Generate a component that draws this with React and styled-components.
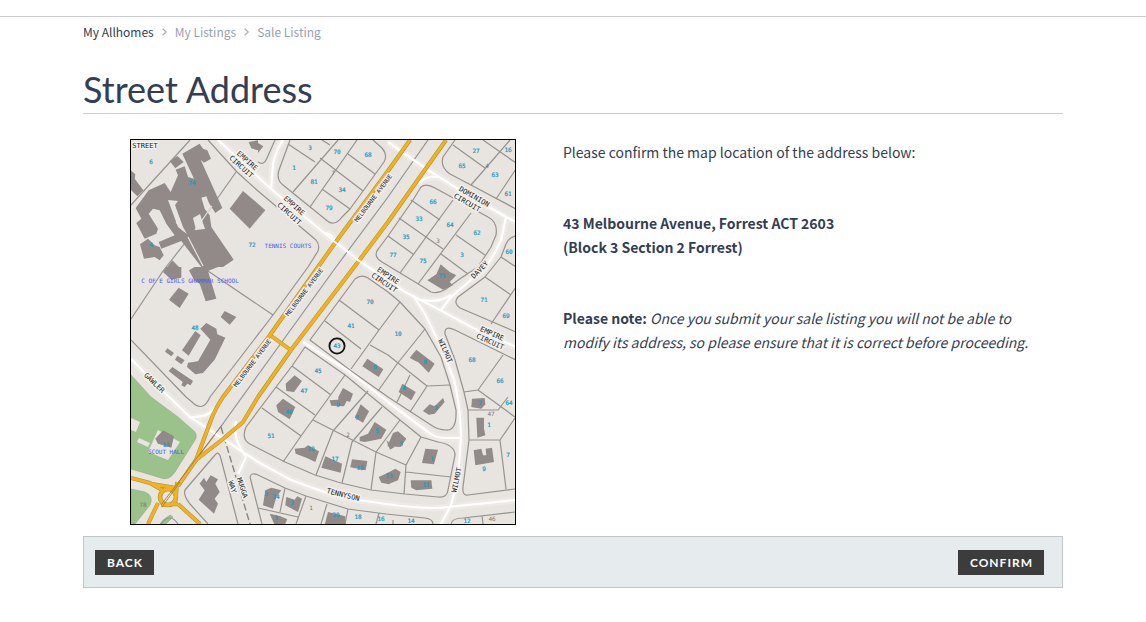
import React from "react";
import styled, { createGlobalStyle, css } from "styled-components";

const GlobalStyle = createGlobalStyle`
  * { box-sizing: border-box; }
  body {
    margin: 0;
    background: #fff;
    color: #343d52;
    font-family: "Noto Sans CJK SC", "Noto Sans", sans-serif;
    font-size: 14px;
    line-height: 24px;
  }
`;

const TopBar = styled.header`
  height: 17px;
  border-bottom: 1px solid #ccc;
`;

const Page = styled.main`
  max-width: 980px;
  margin: 0 auto;
`;

const Breadcrumb = styled.nav`
  display: flex;
  align-items: center;
  gap: 8px;
  height: 30px;
  font-size: 12px;
`;

const Crumb = styled.a`
  color: ${(p) => (p.$root ? "#343d52" : "#9aa1ae")};
  text-decoration: none;
`;

const Title = styled.h1`
  margin: 22px 0 25px;
  padding-bottom: 4px;
  border-bottom: 1px solid #ccc;
  font-family: Lato, sans-serif;
  font-size: 36px;
  font-weight: 400;
  line-height: 40px;
`;

const Content = styled.section`
  display: flex;
  gap: 47px;
  padding-left: 47px;
`;

const MapFrame = styled.figure`
  flex: 0 0 386px;
  margin: 0 0 11px;
  border: 1px solid #000;
  svg { display: block; width: 100%; }
`;

const Details = styled.div`
  flex: 1;
  padding: 1px 16px 0 0;
`;

const Paragraph = styled.p`
  margin: 0 0 47px;
`;

const ActionBar = styled.footer`
  display: flex;
  justify-content: space-between;
  align-items: center;
  height: 52px;
  padding: 0 18px 0 11px;
  border: 1px solid #bfc6c5;
  background: #e6ebed;
`;

const ActionButton = styled.button`
  height: 25px;
  padding: 0 11px 0 12px;
  border: 0;
  background: #3c3c3c;
  color: #fff;
  font-family: Lato, sans-serif;
  font-size: 12px;
  font-weight: 700;
  letter-spacing: 1px;
  text-transform: uppercase;
`;

const haloed = css`
  stroke: #f3f1ee;
  stroke-width: 3px;
  stroke-linejoin: round;
  paint-order: stroke;
`;

const MapLabel = styled.text`
  font-family: "DejaVu Sans Mono", monospace;
  font-size: ${(p) => (p.$kind === "street" ? 7 : 6)}px;
  text-anchor: middle;
  dominant-baseline: central;
  fill: ${(p) =>
    ({ lot: "#2099c0", place: "#4a5cf0", block: "#77726f", street: "#222", avenue: "#222" })[p.$kind]};
  ${(p) => (p.$kind === "street" || p.$kind === "avenue") && haloed}
  ${(p) => p.$kind === "lot" && css`stroke: #2099c0; stroke-width: 0.2px;`}
`;

const parks = [
  "M131 375L151 397L178 417L194 431Q198 435 195 440L175 472Q169 481 161 478L148 474L131 469Z",
  "M131 489L145 492Q154 496 150 505L135 524H131Z",
  "M163 520L170 515L173 517L166 524H160Z",
];

const clearings = [
  "M131 418L140 422L136 432L131 430Z",
  "M139 438L150 443L148 447L137 442Z",
  "M158 430L180 442L168 460L148 452Z",
];

const boundaries = [
  "M190 140L131 205",
  "M208 140L237 172L258 191L316 240Q320 245 318 251L308 267L273 315L210 397Q203 413 192 402L186 397L131 340",
  "M236 172L196 229L163 271L131 319",
  "M205 269L273 315",
  "M428 140L388 197L336 267L258 375L222 425L168 497",
  "M258 162Q264 166 267 158L275 140",
  "M290 140L279 170Q276 180 283 185L325 219Q334 228 342 217L350 209L384 162Q388 155 382 148L373 140",
  "M288 144L315 162M338 140L293 192M357 140L310 207M320 158L363 191M348 154L375 174M322 189L350 209M322 140L330 145",
  "M455 140L443 157Q440 167 450 174L471 185L516 209",
  "M453 145L485 168M471 185L510 140M483 140L516 163M496 199L516 169",
  "M421 187Q426 183 435 188L488 217Q498 222 496 235L491 247L478 267L461 278L446 289Q438 294 431 292L420 285L382 262Q372 256 379 248L388 236L413 200Z",
  "M411 200L440 220M453 200L400 273M399 218L443 249M471 213L418 284M456 235L485 255M388 236L413 254M441 254L468 274",
  "M516 236Q509 237 506 244L501 257L485 277L458 297Q453 303 460 308L516 332",
  "M501 257L516 267M485 277L511 295M491 324L516 287",
  "M516 360L455 330Q444 325 445 334L455 360L464 392L468 410L469 440L463 487Q462 496 468 495L515 489",
  "M503 355L478 390L464 392M478 390L515 417M515 418L500 440H469M500 440L506 489M468 410H498L508 397",
  "M355 279Q361 274 368 278L388 292L400 302L425 329L441 357L450 385L456 410Q457 431 446 430Q438 430 431 425L388 397L350 370L310 340Z",
  "M339 300L379 330M325 321L361 349M400 302L379 330L351 369M370 345L388 355L427 386L450 385M425 329L397 364L378 391M427 386L410 412M410 375L397 402",
  "M305 347L292 366L276 387L246 427Q241 439 250 444L285 462L315 475L341 483L371 490L405 494L438 497Q447 498 448 490L455 455Q455 445 438 442L421 437L400 420L345 375Z",
  "M292 366L331 395M345 375L301 436L283 462M276 387L315 415M262 408L301 436M313 420L376 452L406 465M368 391L333 431L316 475M382 407L352 442L342 483M376 452L371 490M400 420L376 452M421 437L406 465L404 494M406 472L451 477",
  "M250 477Q251 472 258 475L285 488L306 496L348 509L386 514L425 518Q433 519 433 524M250 477L262 524M285 488L280 512M258 508L298 517M306 496L296 524M327 504L321 524M348 509L345 524M379 513L376 524",
  "M451 524Q452 518 463 518L515 512M482 516L483 524",
  "M215 455Q219 450 221 459L238 524M215 455L185 490Q183 495 190 504L208 524",
  "M178 524Q170 512 161 524M393 520V524",
];

const lanes = [
  "M218 140L271 189L323 232L358 260L405 292L440 310L475 329L516 347",
  "M271 189L273 164Q276 150 283 140",
  "M388 142L428 170L455 187L506 217L516 222",
  "M418 184Q426 175 438 177M506 217L501 240Q494 256 485 268L451 297L441 310M421 300Q440 303 451 295",
  "M413 295L425 314L440 345L453 377Q460 400 461 437L458 480L451 505L441 524",
  "M303 342L350 372L388 402L428 432Q435 438 445 438H461",
  "M131 359L168 396L190 417L258 462L291 480L338 497L386 504Q430 510 448 507L515 500",
  "M190 417Q208 418 215 408M324 233Q332 233 336 242M246 457L238 474M236 421Q232 438 246 457",
];

const avenues = [
  "M410 140L388 171L335 243L318 267L270 335L223 397Q215 409 211 420L196 460L178 486",
  "M446 140L388 222L358 262L291 350L258 397L243 422L223 439L196 460",
  "M270 335L292 351",
  "M131 478L150 483L162 490M178 504L200 524M158 503L148 524M177 482L176 497M152 484L176 488M161 505L178 504",
];

// Building footprints are traced per survey tile, at three units to a map unit.
const buildings = [
  [128, 137, [
    "M163 50L215 20L225 35L238 40L249 65L228 77L218 68L283 213L262 228L243 198L235 178L220 182L230 215L245 235L250 270L317 368L285 390H220L160 312L100 335L92 315L140 295L115 260L95 220L75 215L62 230L90 275L85 290L50 305L25 258L40 245L23 213L62 160L110 138L128 165L150 115L143 98L170 88L180 120L198 125Z",
    "M125 72L148 57L167 75L142 94Z", "M8 100L22 112L20 125L46 160L28 178L8 158Z",
    "M36 322L60 305L80 325L95 330L107 355L95 370L80 360L48 365Z",
    "M345 162L390 200V245L365 275L305 215Z", "M118 390L133 370L153 390Z", "M362 15L390 10V40L370 34Z",
  ]],
  [258, 137, ["M0 18L16 28L0 48Z", "M0 200L22 220L0 245Z"]],
  [128, 267, [
    "M105 15L115 0H160V32L130 38Z", "M183 10L200 0H270L240 12L265 95L233 103L215 50L200 42Z",
    "M123 98L152 62L182 80L155 123Z", "M278 150L290 132L325 150L305 173Z",
    "M217 185L235 168L265 185L268 202L292 212L260 278L225 318L202 322L177 300L180 287L210 283L247 218Z",
    "M162 250L202 192L218 205L182 266Z", "M118 244L138 258L130 268L111 254Z", "M148 266L170 280L160 292L141 278Z",
    "M133 300L195 342L188 355L178 350L170 360L160 355L164 345L122 312Z",
  ]],
  [258, 267, ["M83 350L110 325L132 342L108 375L85 372Z", "M328 275L376 307L362 330L313 298Z", "M255 363L285 380L276 405L240 392Z"]],
  [388, 267, [
    "M118 40L145 22L158 -8L185 15L205 25L185 45L195 55L165 68Z",
    "M65 272L85 248L140 290L122 317L100 295L90 285L82 282Z", "M43 350L83 375L70 400L32 375Z",
  ]],
  [128, 397, [
    "M82 125L105 100L138 118L130 152L90 140Z",
    "M235 255L248 235L270 247L262 260L275 285L260 305L270 320L258 350L212 308L230 280L215 260L228 242Z",
  ]],
  [258, 397, [
    "M55 25L75 5L112 30L95 67L60 45Z", "M215 10L240 8L245 -5L275 -5L258 28L220 26Z",
    "M308 22L333 43L315 77L290 62Z", "M305 120L330 110L350 75L385 98L370 125L320 135L305 132Z",
    "M110 155L140 152L150 145L183 163L172 195L145 182L113 170Z", "M202 178L252 200L248 227L190 212Z",
    "M282 187L328 192L323 220L277 211Z", "M362 240L395 225V262L370 257Z", "M385 130L410 150L396 158Z",
    "M22 280L40 272L70 280L55 300L45 335L15 325Z", "M85 300L110 308L118 298L132 305L120 345L82 325Z",
    "M35 350L65 357L88 367L80 384H50Z", "M210 345L262 358V384H200Z",
  ]],
  [388, 397, [
    "M105 42L125 22L140 28L165 3L170 15L140 50L122 53Z", "M55 -5L75 -5L68 8Z",
    "M252 5L290 3L292 22L280 35L250 30Z", "M265 62L288 62V95L292 115L268 122Z",
    "M257 160L280 155L285 175L295 175L293 155L312 152L318 195L262 205Z",
    "M112 155L150 158L138 202L102 198Z", "M15 108L30 103L55 125L38 150L-2 148Z",
    "M68 250L130 250L133 275L85 280L70 272Z", "M-8 232L22 215L38 225L30 250L0 262L-18 250Z",
  ]],
];

const lots = [
  ["6", 151, 161], ["74", 192, 182], ["72", 252, 244], ["4", 151, 244], ["3", 310, 147], ["70", 337, 151], ["68", 368, 154],
  ["1", 294, 167], ["81", 314, 181], ["34", 342, 189], ["79", 329, 207], ["27", 476, 150], ["16", 508, 149],
  ["65", 462, 165], ["63", 495, 174], ["61", 508, 193], ["66", 433, 201], ["33", 419, 218], ["64", 450, 224],
  ["62", 477, 232], ["35", 406, 236], ["3", 462, 254], ["77", 393, 254], ["75", 423, 260], ["60", 509, 251],
  ["73", 442, 275], ["71", 484, 299], ["69", 506, 315], ["70", 370, 301], ["41", 351, 325], ["43", 337, 345],
  ["10", 398, 333], ["8", 425, 361], ["6", 375, 366], ["4", 404, 387], ["68", 472, 359], ["66", 500, 380],
  ["45", 318, 370], ["47", 304, 390], ["49", 289, 411], ["51", 271, 435], ["48", 195, 327], ["9", 338, 404],
  ["7", 357, 417], ["5", 377, 430], ["19", 311, 448], ["17", 335, 458], ["15", 360, 467], ["13", 389, 475],
  ["2", 436, 407], ["3", 401, 443], ["1", 432, 458], ["11", 426, 484], ["2", 480, 402], ["64", 509, 402],
  ["1", 489, 424], ["9", 484, 468], ["7", 508, 454], ["1A", 166, 444], ["3", 266, 493], ["24", 276, 496],
  ["2", 292, 502], ["3", 276, 517], ["20", 336, 514], ["18", 358, 516], ["16", 381, 518], ["14", 411, 520], ["12", 467, 520],
];

const blocks = [["7", 333, 172], ["4", 487, 165], ["3", 438, 240], ["2", 348, 434], ["1", 311, 507], ["47", 491, 413], ["46", 492, 518], ["78", 143, 504]];

const places = [["TENNIS COURTS", 288, 245], ["C OF E GIRLS GRAMMAR SCHOOL", 190, 280], ["SCOUT HALL", 166, 451]];

const streets = [
  ["STREET", 145, 146, 0], ["EMPIRE", 247, 161, 42], ["CIRCUIT", 241, 167, 42], ["EMPIRE", 294, 206, 42], ["CIRCUIT", 289, 214, 42],
  ["DOMINION", 474, 197, 30], ["CIRCUIT", 467, 203, 30], ["EMPIRE", 388, 276, 34], ["CIRCUIT", 384, 283, 34],
  ["DAVEY", 480, 270, -46], ["EMPIRE", 492, 334, 24], ["CIRCUIT", 490, 342, 24], ["WILMOT", 445, 351, 66],
  ["WILMOT", 457, 480, -78], ["TENNYSON", 343, 495, 14], ["GAWLER", 154, 383, 44], ["MUGGA", 242, 488, 72], ["WAY", 232, 487, 72],
];

const avenueNames = [["MELBOURNE AVENUE", 373, 198, -53], ["MELBOURNE AVENUE", 304, 292, -53], ["MELBOURNE AVENUE", 252, 363, -53]];

function Labels({ kind, items }) {
  return items.map(([text, x, y, angle = 0]) => (
    <MapLabel key={`${text}-${x}-${y}`} $kind={kind} x={x} y={y} transform={`rotate(${angle} ${x} ${y})`}>
      {text}
    </MapLabel>
  ));
}

function Paths({ items }) {
  return items.map((d) => <path key={d} d={d} />);
}

function LocationMap() {
  return (
    <svg viewBox="131 140 384 384" role="img" aria-label="Map of 43 Melbourne Avenue, Forrest">
      <rect x="131" y="140" width="384" height="384" fill="#e8e4df" />
      <g fill="none" stroke="#eeebe7" strokeWidth="7"><Paths items={lanes} /></g>
      <g fill="#9cc28b" stroke="#8eab80" strokeWidth=".6"><Paths items={parks} /></g>
      <g fill="#e8e4df"><Paths items={clearings} /></g>
      <g fill="none" stroke="#96928e" strokeWidth="1.2" strokeLinejoin="round"><Paths items={boundaries} /></g>
      <path d="M221 427L250 524" fill="none" stroke="#8a8683" strokeWidth="1.4" strokeDasharray="7 3" />
      <g fill="none" stroke="#fff" strokeWidth="2.2" strokeLinejoin="round"><Paths items={lanes} /></g>
      <g fill="#918a88">
        {buildings.map(([x, y, shapes]) => (
          <g key={`${x}-${y}`} transform={`translate(${x} ${y}) scale(.333333)`}><Paths items={shapes} /></g>
        ))}
      </g>
      <path d="M168 200L178 201L175 205L183 227L187 234L178 227ZM193 218L200 214L205 229L196 230Z" fill="#e8e4df" />
      <path d="M188 237L203 266M176 222L184 231M195 230L212 206" fill="none" stroke="#e8e4df" strokeWidth="1.2" />
      <g fill="none" stroke="#b98c26" strokeWidth="4" strokeLinejoin="round"><Paths items={avenues} /></g>
      <circle cx="168" cy="497" r="8" fill="#e8e4df" stroke="#b98c26" strokeWidth="4.6" />
      <g fill="none" stroke="#edb325" strokeWidth="3" strokeLinejoin="round"><Paths items={avenues} /></g>
      <circle cx="168" cy="497" r="8" fill="none" stroke="#edb325" strokeWidth="3.4" />
      <path d="M222 425L161 505M180 482L162 507" fill="none" stroke="#96783a" strokeWidth=".8" />
      <path d="M332 240L339 245M355 258L362 263" stroke="#fff" strokeWidth="2" />
      <Labels kind="block" items={blocks} />
      <Labels kind="lot" items={lots} />
      <Labels kind="place" items={places} />
      <Labels kind="street" items={streets} />
      <Labels kind="avenue" items={avenueNames} />
      <circle cx="337" cy="346" r="7.6" fill="none" stroke="#111" strokeWidth="1.8" />
    </svg>
  );
}

function Chevron() {
  return (
    <svg width="5" height="8" viewBox="0 0 5 8" fill="none" stroke="#a8aeb8" strokeWidth="1.2" aria-hidden="true">
      <path d="M.7 .7L4.2 4L.7 7.3" />
    </svg>
  );
}

export default function App() {
  return (
    <>
      <GlobalStyle />
      <TopBar />
      <Page>
        <Breadcrumb aria-label="Breadcrumb">
          <Crumb href="#home" $root>My Allhomes</Crumb>
          <Chevron />
          <Crumb href="#listings">My Listings</Crumb>
          <Chevron />
          <Crumb as="span" aria-current="page">Sale Listing</Crumb>
        </Breadcrumb>
        <Title>Street Address</Title>
        <Content>
          <MapFrame><LocationMap /></MapFrame>
          <Details>
            <Paragraph>Please confirm the map location of the address below:</Paragraph>
            <Paragraph>
              <strong>43 Melbourne Avenue, Forrest ACT 2603<br />(Block 3 Section 2 Forrest)</strong>
            </Paragraph>
            <Paragraph>
              <strong>Please note:</strong>{" "}
              <em>Once you submit your sale listing you will not be able to modify its address, so please ensure that it is correct before proceeding.</em>
            </Paragraph>
          </Details>
        </Content>
        <ActionBar>
          <ActionButton type="button">Back</ActionButton>
          <ActionButton type="button">Confirm</ActionButton>
        </ActionBar>
      </Page>
    </>
  );
}
